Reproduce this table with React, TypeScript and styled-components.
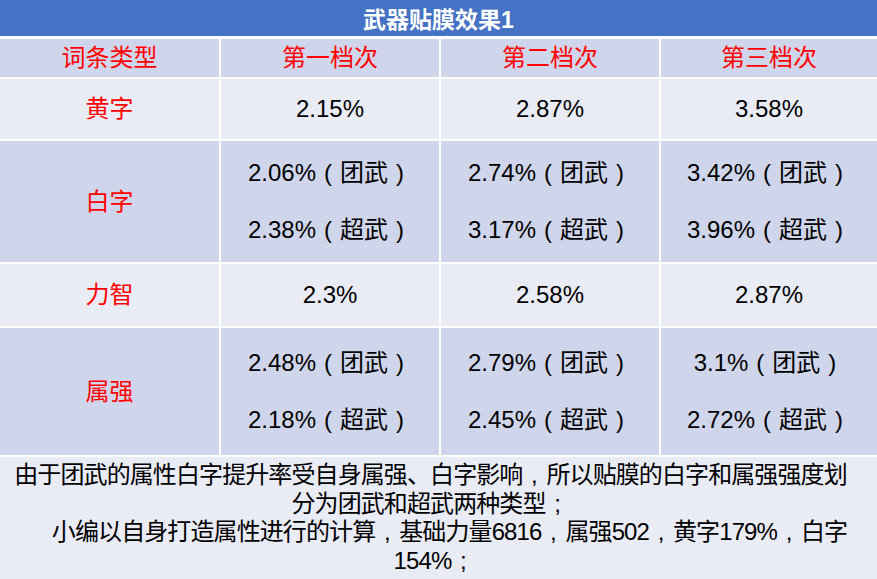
import React from "react";
import styled, { createGlobalStyle } from "styled-components";

const Global = createGlobalStyle`
  html, body { margin: 0; padding: 0; background: #ffffff; }
  body { font-family: "Liberation Sans", "Noto Sans CJK SC", sans-serif; }
`;

const Sheet = styled.div`
  width: 877px;
  height: 579px;
  display: flex;
  flex-direction: column;
  background: #ffffff;
  overflow: hidden;
`;

const TitleBar = styled.div`
  height: 36px;
  background: #4472c4;
  color: #ffffff;
  font-family: "Liberation Sans", "Noto Sans CJK SC", sans-serif;
  font-weight: 700;
  font-size: 23px;
  display: flex;
  align-items: center;
  justify-content: center;
  margin-bottom: 3px;
`;

const Row = styled.div<{ $h: number; $dark: boolean }>`
  display: grid;
  grid-template-columns: 219px 218px 218px 1fr;
  column-gap: 2px;
  height: ${(p) => p.$h}px;
  margin-bottom: 2px;
  & > div {
    background: ${(p) => (p.$dark ? "#cfd5ea" : "#e9ebf5")};
  }
`;

const Cell = styled.div<{ $red?: boolean }>`
  display: flex;
  flex-direction: column;
  align-items: center;
  justify-content: center;
  gap: 29px;
  font-size: 24px;
  line-height: 28px;
  color: ${(p) => (p.$red ? "#ff0000" : "#000000")};
  white-space: nowrap;
`;

const Punct = styled.span`
  display: inline-block;
  width: 1em;
  text-align: center;
  font-family: "Liberation Sans", sans-serif;
  letter-spacing: 0;
`;

const Footer = styled.div`
  flex: 1;
  background: #e9ebf5;
  display: flex;
  flex-direction: column;
  align-items: center;
  padding-top: 4px;
  padding-right: 8px;
  font-size: 24px;
  line-height: 28.5px;
  letter-spacing: -0.9px;
  color: #000000;
`;

const Line = styled.div<{ $shift?: number }>`
  white-space: nowrap;
  margin-left: ${(p) => p.$shift ?? 0}px;
`;

// render full-width punctuation as centred glyphs in a 1em box
function Txt({ s }: { s: string }) {
  const map: Record<string, string> = { "（": "(", "）": ")", "，": ",", "；": ";" };
  const parts: React.ReactNode[] = [];
  let buf = "";
  Array.from(s).forEach((ch, i) => {
    if (map[ch]) {
      if (buf) parts.push(buf);
      buf = "";
      parts.push(<Punct key={i}>{map[ch]}</Punct>);
    } else {
      buf += ch;
    }
  });
  if (buf) parts.push(buf);
  return <>{parts}</>;
}

type R = { label: string; vals: string[][]; h: number; dark: boolean };

const rows: R[] = [
  { label: "黄字", vals: [["2.15%"], ["2.87%"], ["3.58%"]], h: 60, dark: false },
  {
    label: "白字",
    vals: [
      ["2.06%（团武）", "2.38%（超武）"],
      ["2.74%（团武）", "3.17%（超武）"],
      ["3.42%（团武）", "3.96%（超武）"],
    ],
    h: 121,
    dark: true,
  },
  { label: "力智", vals: [["2.3%"], ["2.58%"], ["2.87%"]], h: 62, dark: false },
  {
    label: "属强",
    vals: [
      ["2.48%（团武）", "2.18%（超武）"],
      ["2.79%（团武）", "2.45%（超武）"],
      ["3.1%（团武）", "2.72%（超武）"],
    ],
    h: 127,
    dark: true,
  },
];

const footerLines: { t: string; shift: number }[] = [
  { t: "由于团武的属性白字提升率受自身属强、白字影响，所以贴膜的白字和属强强度划", shift: -8 },
  { t: "分为团武和超武两种类型；", shift: -8 },
  { t: "小编以自身打造属性进行的计算，基础力量6816，属强502，黄字179%，白字", shift: 30 },
  { t: "154%；", shift: 0 },
];

export default function App() {
  return (
    <>
      <Global />
      <Sheet>
        <TitleBar>武器贴膜效果1</TitleBar>
        <Row $h={38} $dark={true}>
          <Cell $red>词条类型</Cell>
          <Cell $red>第一档次</Cell>
          <Cell $red>第二档次</Cell>
          <Cell $red>第三档次</Cell>
        </Row>
        {rows.map((r) => (
          <Row key={r.label} $h={r.h} $dark={r.dark}>
            <Cell $red>{r.label}</Cell>
            {r.vals.map((v, i) => (
              <Cell key={i}>
                {v.map((t) => (
                  <span key={t}>
                    <Txt s={t} />
                  </span>
                ))}
              </Cell>
            ))}
          </Row>
        ))}
        <Footer>
          {footerLines.map((l) => (
            <Line key={l.t} $shift={l.shift}>
              <Txt s={l.t} />
            </Line>
          ))}
        </Footer>
      </Sheet>
    </>
  );
}
